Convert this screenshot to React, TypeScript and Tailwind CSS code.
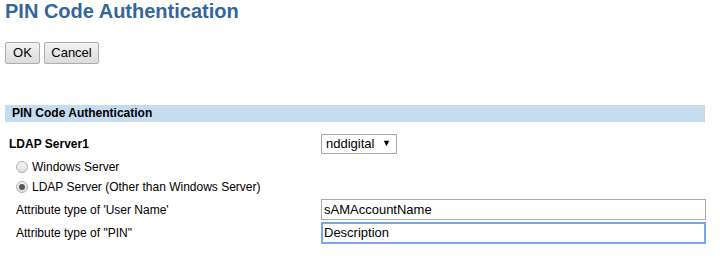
export default function App() {
  return (
    <div className="bg-white w-[720px] h-[275px] px-[5px] text-[12px] text-black font-['Liberation_Sans',Arial,sans-serif]">
      <h1 className="text-[20px] font-bold leading-[23px] text-[#336699] pt-0">PIN Code Authentication</h1>
      <div className="flex gap-[4px] mt-[19px]">
        <button className="h-[22px] w-[35px] border border-[#adadad] rounded-[2px] bg-gradient-to-b from-[#f2f2f2] to-[#dcdcdc] text-[13px]">OK</button>
        <button className="h-[22px] w-[55px] border border-[#adadad] rounded-[2px] bg-gradient-to-b from-[#f2f2f2] to-[#dcdcdc] text-[13px]">Cancel</button>
      </div>
      <div className="mt-[41px] w-[700px] h-[17px] bg-[#c5dcef] pl-[7px] font-bold leading-[17px]">PIN Code Authentication</div>
      <div className="flex items-center h-[26px] mt-[9px]">
        <div className="w-[316px] pl-[4px] font-bold">LDAP Server1</div>
        <div className="flex items-center justify-between w-[76px] h-[20px] border border-[#a9a9a9] pl-[4px] pr-[5px] text-[13px]">
          <span>nddigital</span>
          <span className="text-[9px]">▼</span>
        </div>
      </div>
      <div className="flex flex-col pl-[11px]">
        <label className="flex items-center h-[20px] gap-[4px]">
          <span className="w-[12px] h-[12px] rounded-full border border-[#b0b0b0] bg-gradient-to-b from-[#f4f4f4] to-[#dedede]" />
          <span>Windows Server</span>
        </label>
        <label className="flex items-center h-[20px] gap-[4px]">
          <span className="w-[12px] h-[12px] rounded-full border border-[#b0b0b0] bg-gradient-to-b from-[#f4f4f4] to-[#dedede] flex items-center justify-center">
            <span className="w-[6px] h-[6px] rounded-full bg-[#555]" />
          </span>
          <span>LDAP Server (Other than Windows Server)</span>
        </label>
      </div>
      <div className="flex items-center h-[23px] mt-[1px]">
        <div className="w-[316px] pl-[11px]">Attribute type of 'User Name'</div>
        <div className="w-[385px] h-[21px] border border-[#a9a9a9] pl-[2px] leading-[19px] text-[13px]">sAMAccountName</div>
      </div>
      <div className="flex items-center h-[23px]">
        <div className="w-[316px] pl-[11px]">Attribute type of "PIN"</div>
        <div className="w-[385px] h-[22px] border-2 border-[#7aa7e9] pl-[1px] leading-[18px] text-[13px]">Description</div>
      </div>
    </div>
  )
}
